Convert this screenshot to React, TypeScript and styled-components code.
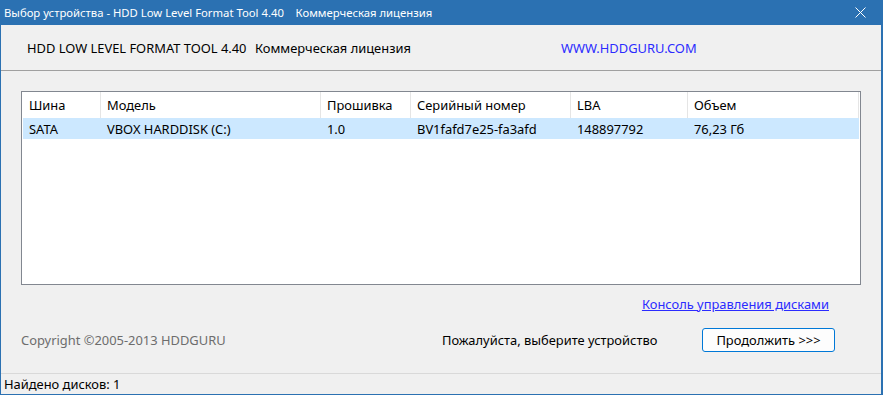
import React from 'react';
import styled, {createGlobalStyle} from 'styled-components';

const Global = createGlobalStyle`
  html, body {
    margin: 0;
    padding: 0;
    background: #f0f0f0;
  }
  body {
    font-family: "Noto Sans", "Open Sans", sans-serif;
    font-size: 12.9px;
    color: #000;
  }
`;

const Window = styled.div`
  width: 883px;
  height: 395px;
  box-sizing: border-box;
  display: flex;
  flex-direction: column;
  background: #f0f0f0;
  border: 1px solid #2b71b2;
  border-top: none;
  border-right-width: 2px;
`;

const TitleBar = styled.div`
  height: 25px;
  flex-shrink: 0;
  background: #2b71b2;
  color: #fff;
  display: flex;
  align-items: center;
  justify-content: space-between;
  padding: 0 0 0 4px;
  margin: 0 -2px 0 -1px;
  white-space: pre;
  font-size: 11.3px;
`;

const CloseBox = styled.div`
  width: 46px;
  height: 25px;
  display: flex;
  align-items: center;
  justify-content: center;
`;

const Header = styled.div`
  height: 45px;
  display: flex;
  align-items: center;
  padding-left: 26px;
  border-bottom: 1px solid #a0a0a0;
  flex-shrink: 0;
`;

const HeaderText = styled.span<{w?: number}>`
  width: ${p => (p.w ? `${p.w}px` : 'auto')};
  white-space: nowrap;
`;

const SiteLink = styled.span`
  color: #2b2bff;
`;

const Content = styled.div`
  flex: 1;
  display: flex;
  flex-direction: column;
  padding: 20px 20px 0 20px;
`;

const ListBox = styled.div`
  height: 194px;
  box-sizing: border-box;
  border: 1px solid #828790;
  background: #fff;
  padding: 0 1px;
`;

const Row = styled.div<{head?: boolean; selected?: boolean}>`
  display: grid;
  grid-template-columns: 78px 220px 90px 160px 117px 1fr;
  height: ${p => (p.head ? '26px' : '21px')};
  background: ${p => (p.selected ? '#cce8ff' : 'transparent')};
`;

const Cell = styled.div<{head?: boolean}>`
  display: flex;
  align-items: center;
  padding-left: 6px;
  white-space: nowrap;
  border-right: ${p => (p.head ? '1px solid #e5e5e5' : 'none')};
`;

const LinkRow = styled.div`
  display: flex;
  justify-content: flex-end;
  padding: 10px 32px 0 0;
  height: 18px;
`;

const DiskLink = styled.span`
  color: #2b2bff;
  text-decoration: underline;
`;

const BottomRow = styled.div`
  display: flex;
  align-items: center;
  margin-top: 15px;
  height: 24px;
`;

const Copyright = styled.span`
  color: #6d6d6d;
  width: 421px;
`;

const Hint = styled.span`
  width: 260px;
`;

const Button = styled.button`
  width: 133px;
  height: 24px;
  box-sizing: border-box;
  border: 1px solid #0078d7;
  border-radius: 3px;
  background: #fdfdfd;
  font: inherit;
  color: #000;
  padding: 0;
`;

const Spacer = styled.div`
  flex: 1;
`;

const StatusBar = styled.div`
  height: 20px;
  flex-shrink: 0;
  border-top: 1px solid #d9d9d9;
  display: flex;
  align-items: center;
  padding-left: 3px;
`;

const columns = ['Шина', 'Модель', 'Прошивка', 'Серийный номер', 'LBA', 'Объем'];
const disks = [
  ['SATA', 'VBOX HARDDISK (C:)', '1.0', 'BV1fafd7e25-fa3afd', '148897792', '76,23 Гб'],
];

export default function App() {
  return (
    <>
      <Global/>
      <Window>
        <TitleBar>
          <span>{'Выбор устройства - HDD Low Level Format Tool 4.40    Коммерческая лицензия'}</span>
          <CloseBox>
            <svg width="11" height="11" viewBox="0 0 11 11">
              <path d="M0.5 0.5 L10.5 10.5 M10.5 0.5 L0.5 10.5" stroke="#fff" strokeWidth="1"/>
            </svg>
          </CloseBox>
        </TitleBar>
        <Header>
          <HeaderText w={228}>HDD LOW LEVEL FORMAT TOOL 4.40</HeaderText>
          <HeaderText w={306}>Коммерческая лицензия</HeaderText>
          <SiteLink>WWW.HDDGURU.COM</SiteLink>
        </Header>
        <Content>
          <ListBox>
            <Row head>
              {columns.map(c => <Cell head key={c}>{c}</Cell>)}
            </Row>
            {disks.map(d => (
              <Row selected key={d[3]}>
                {d.map((v, i) => <Cell key={i}>{v}</Cell>)}
              </Row>
            ))}
          </ListBox>
          <LinkRow>
            <DiskLink>Консоль управления дисками</DiskLink>
          </LinkRow>
          <BottomRow>
            <Copyright>Copyright ©2005-2013 HDDGURU</Copyright>
            <Hint>Пожалуйста, выберите устройство</Hint>
            <Button>Продолжить &gt;&gt;&gt;</Button>
          </BottomRow>
        </Content>
        <Spacer/>
        <StatusBar>Найдено дисков: 1</StatusBar>
      </Window>
    </>
  );
}
